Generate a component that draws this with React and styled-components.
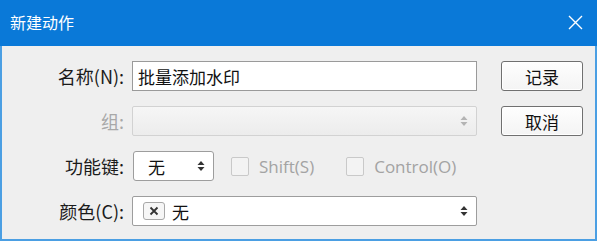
import React from "react";
import styled, { createGlobalStyle } from "styled-components";

const GlobalStyle = createGlobalStyle`
    html, body {
        margin: 0;
        padding: 0;
        background: #ffffff;
    }
    body {
        font-family: "Noto Sans CJK SC", "Noto Sans", sans-serif;
    }
`

const App = () => {
    return (
    <>
        <GlobalStyle />
        <Window>
            <TitleBar>
                <Title>新建动作</Title>
                <CloseBtn>
                    <svg width="15" height="15" viewBox="0 0 15 15">
                        <path d="M1 1 L14 14 M14 1 L1 14" stroke="#ffffff" strokeWidth="1.4" fill="none" />
                    </svg>
                </CloseBtn>
            </TitleBar>
            <Body>
                <Label>名称(N):</Label>
                <TextInput>批量添加水印</TextInput>
                <Button>记录</Button>

                <Label disabled>组:</Label>
                <Select disabled wide>
                    <span></span>
                    <Arrows disabled />
                </Select>
                <Button>取消</Button>

                <Label>功能键:</Label>
                <KeyRow>
                    <Select small>
                        <span>无</span>
                        <Arrows />
                    </Select>
                    <Check>
                        <Box />
                        <CheckText>Shift(S)</CheckText>
                    </Check>
                    <Check>
                        <Box />
                        <CheckText>Control(O)</CheckText>
                    </Check>
                </KeyRow>
                <span></span>

                <Label>颜色(C):</Label>
                <Select wide>
                    <ColorValue>
                        <Swatch>
                            <svg width="10" height="10" viewBox="0 0 10 10">
                                <path d="M1.5 1.5 L8.5 8.5 M8.5 1.5 L1.5 8.5" stroke="#333" strokeWidth="1.8" fill="none" />
                            </svg>
                        </Swatch>
                        <span>无</span>
                    </ColorValue>
                    <Arrows />
                </Select>
                <span></span>
            </Body>
        </Window>
    </>
    )
}

const Arrows = ({disabled}) => (
    <ArrowWrap>
        <svg width="8" height="12" viewBox="0 0 8 12">
            <path d="M0.5 5 L4 1 L7.5 5 Z M0.5 7 L4 11 L7.5 7 Z" fill={disabled ? "#b4b4b4" : "#333"} />
        </svg>
    </ArrowWrap>
)

export default App;

const Window = styled.div`
    width: 593px;
    height: 239px;
    border: 2px solid #4b9fe3;
    border-top: none;
    background: #efefef;
    display: flex;
    flex-direction: column;
`

const TitleBar = styled.div`
    height: 46px;
    margin: 0 -2px;
    background: #0a79d8;
    display: flex;
    align-items: center;
    justify-content: space-between;
    padding: 0 14px 0 10px;
`

const Title = styled.div`
    color: #ffffff;
    font-size: 16px;
    margin-top: -2px;
`

const CloseBtn = styled.div`
    display: flex;
    align-items: center;
    margin-top: -2px;
`

const Body = styled.div`
    display: grid;
    grid-template-columns: 122px 345px 98px;
    grid-auto-rows: 30px;
    column-gap: 8px;
    row-gap: 15px;
    padding-top: 15px;

    & > :nth-child(3n) {
        margin-left: 16px;
    }
`

const Label = styled.div`
    display: flex;
    align-items: center;
    justify-content: flex-end;
    font-size: 18px;
    color: ${props => props.disabled ? "#a8a8a8" : "#1a1a1a"};
`

const TextInput = styled.div`
    box-sizing: border-box;
    border: 1px solid #9a9a9a;
    background: #ffffff;
    display: flex;
    align-items: center;
    padding-left: 5px;
    font-size: 17px;
    color: #111;
`

const Button = styled.div`
    box-sizing: border-box;
    border: 1px solid #707070;
    border-radius: 3px;
    background: linear-gradient(#fefefe, #f4f4f4);
    box-shadow: inset 0 0 0 1px #ffffff;
    display: flex;
    align-items: center;
    justify-content: center;
    font-size: 17px;
    color: #111;
`

const Select = styled.div`
    box-sizing: border-box;
    width: ${props => props.small ? "81px" : "345px"};
    height: 30px;
    border: 1px solid ${props => props.disabled ? "#d2d2d2" : "#9d9d9d"};
    border-radius: ${props => props.small ? "3px" : "2px"};
    background: ${props => props.disabled ? "linear-gradient(#f6f6f6, #ececec)" : "#ffffff"};
    display: flex;
    align-items: center;
    justify-content: space-between;
    padding: 0 8px 0 ${props => props.small ? "14px" : "10px"};
    font-size: 17px;
    color: #111;
`

const ArrowWrap = styled.div`
    display: flex;
    align-items: center;
`

const KeyRow = styled.div`
    display: flex;
    align-items: center;
    margin-left: 1px;
`

const Check = styled.div`
    display: flex;
    align-items: center;
    margin-left: 17px;

    & + & {
        margin-left: 32px;
    }
`

const Box = styled.div`
    box-sizing: border-box;
    width: 18px;
    height: 19px;
    border: 1px solid #c9c9c9;
    border-radius: 2px;
    background: #f3f3f3;
`

const CheckText = styled.div`
    margin-left: 10px;
    font-family: "Open Sans", "Noto Sans", sans-serif;
    font-size: 17px;
    color: #a3a3a3;
`

const ColorValue = styled.div`
    display: flex;
    align-items: center;
    gap: 7px;
`

const Swatch = styled.div`
    box-sizing: border-box;
    width: 22px;
    height: 18px;
    border: 1px solid #a8a8a8;
    border-radius: 3px;
    background: #f6f6f6;
    display: flex;
    align-items: center;
    justify-content: center;
`
